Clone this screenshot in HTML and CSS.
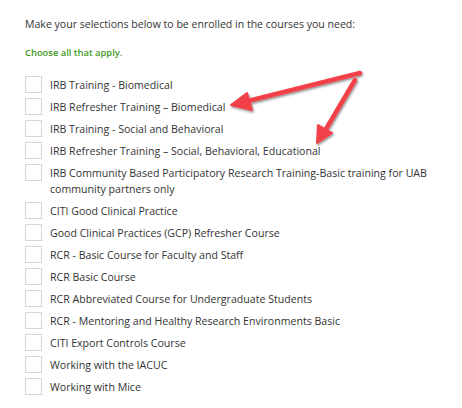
FILE: index.html
```html
<!DOCTYPE html>
<html>
<head>
<meta charset="utf-8">
<link rel="stylesheet" href="styles.css">
</head>
<body>
<div class="page">
  <p class="intro">Make your selections below to be enrolled in the courses you need:</p>
  <p class="hint">Choose all that apply.</p>
  <ul class="choices">
    <li class="choice"><span class="box"></span><span class="label">IRB Training - Biomedical</span></li>
    <li class="choice"><span class="box"></span><span class="label">IRB Refresher Training – Biomedical</span></li>
    <li class="choice"><span class="box"></span><span class="label">IRB Training - Social and Behavioral</span></li>
    <li class="choice"><span class="box"></span><span class="label">IRB Refresher Training – Social, Behavioral, Educational</span></li>
    <li class="choice"><span class="box"></span><span class="label">IRB Community Based Participatory Research Training-Basic training for UAB community partners only</span></li>
    <li class="choice"><span class="box"></span><span class="label">CITI Good Clinical Practice</span></li>
    <li class="choice"><span class="box"></span><span class="label">Good Clinical Practices (GCP) Refresher Course</span></li>
    <li class="choice"><span class="box"></span><span class="label">RCR - Basic Course for Faculty and Staff</span></li>
    <li class="choice"><span class="box"></span><span class="label">RCR Basic Course</span></li>
    <li class="choice"><span class="box"></span><span class="label">RCR Abbreviated Course for Undergraduate Students</span></li>
    <li class="choice"><span class="box"></span><span class="label">RCR - Mentoring and Healthy Research Environments Basic</span></li>
    <li class="choice"><span class="box"></span><span class="label">CITI Export Controls Course</span></li>
    <li class="choice"><span class="box"></span><span class="label">Working with the IACUC</span></li>
    <li class="choice"><span class="box"></span><span class="label">Working with Mice</span></li>
  </ul>
  <svg class="arrows" width="462" height="408" viewBox="0 0 462 408">
    <defs>
      <filter id="sh" x="-20%" y="-20%" width="140%" height="140%">
        <feDropShadow dx="1" dy="1.5" stdDeviation="1.2" flood-color="#000" flood-opacity="0.45"/>
      </filter>
    </defs>
    <g filter="url(#sh)" fill="#f2404a" stroke="#f2404a" stroke-linecap="round" stroke-linejoin="round">
      <line x1="360" y1="73" x2="248" y2="101" stroke-width="4.5"/>
      <polygon points="231,105 247,93 252,110" stroke-width="2"/>
      <line x1="355" y1="80" x2="326" y2="129" stroke-width="4.5"/>
      <polygon points="317,143 318,125 332,133" stroke-width="2"/>
    </g>
  </svg>
</div>
</body>
</html>
```

FILE: styles.css
```css
html, body {
  margin: 0;
  padding: 0;
  background: #ffffff;
}
.page {
  position: relative;
  width: 462px;
  height: 408px;
  padding: 16px 0 0 25px;
  box-sizing: border-box;
  font-family: "Open Sans", "Liberation Sans", sans-serif;
  color: #333333;
}
.intro {
  margin: 0;
  font-size: 10.55px;
  line-height: 16px;
}
.hint {
  margin: 13px 0 0;
  font-size: 9.4px;
  line-height: 16px;
  font-weight: 600;
  color: #3d9a1c;
}
.choices {
  list-style: none;
  margin: 15px 0 0;
  padding: 0;
  display: flex;
  flex-direction: column;
  gap: 5px;
}
.choice {
  display: flex;
  align-items: flex-start;
  gap: 8px;
  font-size: 10.6px;
  line-height: 16px;
  padding-right: 20px;
}
.box {
  flex: none;
  width: 15px;
  height: 15px;
  border: 1px solid #d6d6d6;
  background: #fff;
}
.label {
  padding-top: 1px;
}
.arrows {
  position: absolute;
  left: 0;
  top: 0;
  pointer-events: none;
}
```
